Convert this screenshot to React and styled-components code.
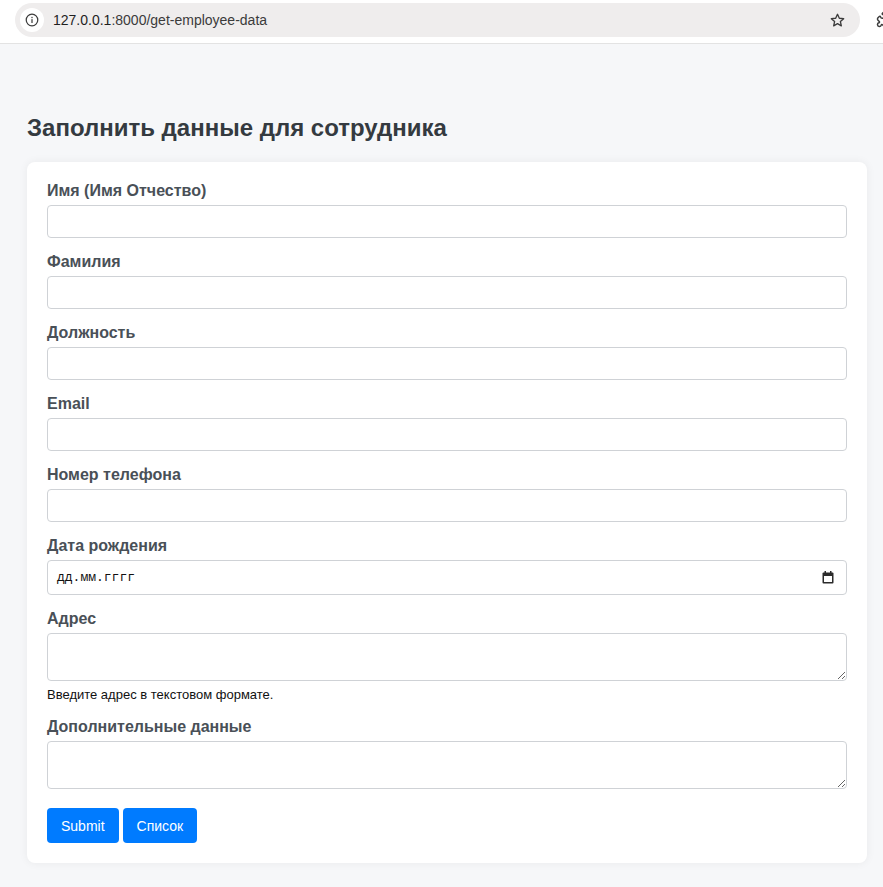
import React from "react";
import styled, { createGlobalStyle } from "styled-components";
import { Puzzle } from "lucide-react";

const GlobalStyle = createGlobalStyle`
  html, body {
    margin: 0;
    padding: 0;
    background: #f6f7f9;
    font-family: "Liberation Sans", Arial, sans-serif;
  }
  * {
    box-sizing: border-box;
  }
`;

const fields = [
  { label: "Имя (Имя Отчество)" },
  { label: "Фамилия" },
  { label: "Должность" },
  { label: "Email" },
  { label: "Номер телефона" },
];

const App = () => {
  return (
    <>
      <GlobalStyle />
      <BrowserBar>
        <AddressPill>
          <InfoBadge>
            <svg width="14" height="14" viewBox="0 0 16 16" fill="none">
              <circle cx="8" cy="8" r="6.6" stroke="#3c3c3c" strokeWidth="1.4" />
              <rect x="7.3" y="7" width="1.4" height="4.4" fill="#3c3c3c" />
              <rect x="7.3" y="4.4" width="1.4" height="1.5" fill="#3c3c3c" />
            </svg>
          </InfoBadge>
          <Url>
            127.0.0.1<span>:8000/get-employee-data</span>
          </Url>
          <Star>
            <svg width="17" height="17" viewBox="0 0 24 24" fill="none">
              <path
                d="M12 3.2l2.6 5.6 6.1.6-4.6 4.1 1.3 6-5.4-3.1-5.4 3.1 1.3-6-4.6-4.1 6.1-.6z"
                stroke="#3c3c3c"
                strokeWidth="1.9"
                strokeLinejoin="round"
              />
            </svg>
          </Star>
        </AddressPill>
        <ExtIcon>
          <Puzzle size={18} strokeWidth={2} color="#3c3c3c" />
        </ExtIcon>
      </BrowserBar>
      <Page>
        <Title>Заполнить данные для сотрудника</Title>
        <Card>
          {fields.map((f) => (
            <Group key={f.label}>
              <Label>{f.label}</Label>
              <Input type="text" />
            </Group>
          ))}
          <Group>
            <Label>Дата рождения</Label>
            <DateBox>
              <span>дд.мм.гггг</span>
              <svg width="12" height="13" viewBox="0 0 12 13">
                <rect x="0.5" y="1.5" width="11" height="11" rx="1" fill="#2b2b2b" />
                <rect x="2" y="5" width="8" height="6" fill="#fff" />
                <rect x="2.5" y="0" width="1.5" height="3" fill="#2b2b2b" />
                <rect x="8" y="0" width="1.5" height="3" fill="#2b2b2b" />
              </svg>
            </DateBox>
          </Group>
          <Group>
            <Label>Адрес</Label>
            <TextArea />
            <Hint>Введите адрес в текстовом формате.</Hint>
          </Group>
          <Group>
            <Label>Дополнительные данные</Label>
            <TextArea />
          </Group>
          <Buttons>
            <Button>Submit</Button>
            <Button>Список</Button>
          </Buttons>
        </Card>
      </Page>
    </>
  );
};

export default App;

const BrowserBar = styled.div`
  height: 44px;
  background: #fff;
  border-bottom: 1px solid #e3e3e3;
  display: flex;
  align-items: flex-start;
  padding: 3px 0 0 15px;
  overflow: hidden;
`;

const AddressPill = styled.div`
  width: 845px;
  height: 34px;
  border-radius: 17px;
  background: #efeded;
  display: flex;
  align-items: center;
  padding: 0 14px 0 5px;
  flex-shrink: 0;
`;

const InfoBadge = styled.div`
  width: 24px;
  height: 24px;
  border-radius: 50%;
  background: #fff;
  display: flex;
  align-items: center;
  justify-content: center;
`;

const Url = styled.div`
  margin-left: 9px;
  font-family: "Liberation Sans", Arial, sans-serif;
  font-size: 14px;
  color: #1f1f1f;
  flex: 1;

  > span {
    color: #3b3b3b;
  }
`;

const Star = styled.div`
  display: flex;
  align-items: center;
`;

const ExtIcon = styled.div`
  margin: 7px 0 0 16px;
  flex-shrink: 0;
`;

const Page = styled.div`
  padding: 70px 16px 24px 27px;
`;

const Title = styled.h2`
  margin: 0 0 20px;
  font-size: 24px;
  line-height: 28px;
  font-weight: 700;
  color: #343a40;
`;

const Card = styled.div`
  background: #fff;
  border-radius: 8px;
  box-shadow: 0 0 10px rgba(0, 0, 0, 0.06);
  padding: 20px 20px 20px;
`;

const Group = styled.div`
  margin-bottom: 15px;
`;

const Label = styled.label`
  display: block;
  font-size: 16px;
  line-height: 18px;
  font-weight: 700;
  color: #495057;
  margin-bottom: 5px;
`;

const Input = styled.input`
  display: block;
  width: 100%;
  height: 33px;
  border: 1px solid #cfd2d6;
  border-radius: 4px;
  background: #fff;
  padding: 0 8px;
  font-size: 14px;
  outline: none;
`;

const DateBox = styled.div`
  height: 35px;
  border: 1px solid #cfd2d6;
  border-radius: 4px;
  display: flex;
  align-items: center;
  justify-content: space-between;
  padding: 0 12px 0 9px;

  > span {
    font-family: "Liberation Mono", "Courier New", monospace;
    font-size: 13px;
    color: #111;
  }
`;

const TextArea = styled.textarea`
  display: block;
  width: 100%;
  height: 48px;
  border: 1px solid #cfd2d6;
  border-radius: 4px;
  padding: 6px 8px;
  font-family: "Liberation Sans", Arial, sans-serif;
  font-size: 14px;
  resize: vertical;
  outline: none;
`;

const Hint = styled.small`
  display: block;
  margin-top: 5px;
  font-size: 13px;
  line-height: 17px;
  color: #111;
`;

const Buttons = styled.div`
  display: flex;
  gap: 4px;
  padding-top: 4px;
`;

const Button = styled.button`
  height: 35px;
  padding: 0 14px;
  border: none;
  border-radius: 4px;
  background: #007bff;
  color: #fff;
  font-family: "Liberation Sans", Arial, sans-serif;
  font-size: 14px;
  cursor: pointer;
`;
